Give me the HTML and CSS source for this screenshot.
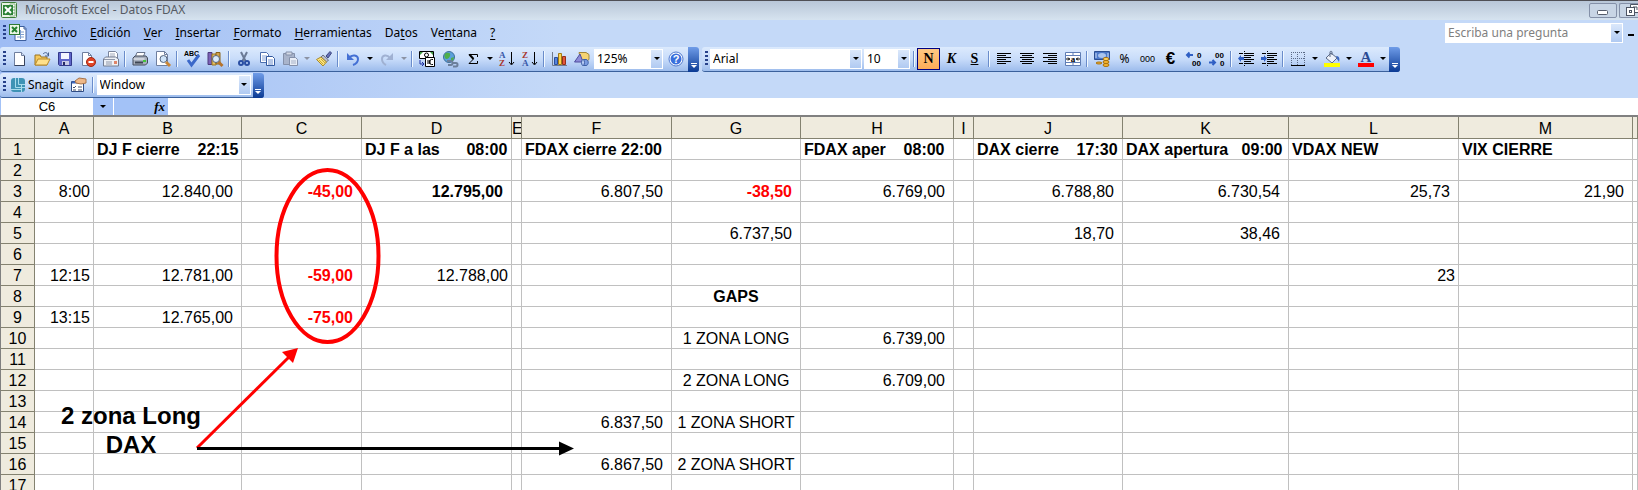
FILE: index.html
```html
<!DOCTYPE html>
<html lang="es">
<head>
    <meta charset="UTF-8">
    <title>Microsoft Excel - Datos FDAX</title>
    <link rel="stylesheet" href="styles.css">
</head>
<body>
<header class="title_bar">
    <svg class="icon" viewBox="0 0 16 16"><rect x="0.5" y="0.5" width="15" height="15" rx="1" fill="#e9f3e4" stroke="#3f7f3a"/><path d="M9 2h5v12H9z" fill="#fff" stroke="#8db98a"/><path d="M10 5h4M10 8h4M10 11h4" stroke="#6fa56b"/><path d="M2 3h10v10H2z" fill="#2c8236"/><path d="M4 5l6 6M10 5l-6 6" stroke="#fff" stroke-width="2"/></svg>
    <h1 class="title_text">Microsoft Excel - Datos FDAX</h1>
    <button class="window_button" aria-label="Minimizar"><svg width="12" height="14" viewBox="0 0 12 14"><rect x="0.5" y="7.5" width="10" height="4" rx="1" fill="#fff" stroke="#555c6b"/></svg></button>
    <button class="window_button cut" aria-label="Restaurar"><svg width="12" height="14" viewBox="0 0 12 14"><path d="M4.500 1.500h8v8h-8z" fill="#fff" stroke="#4d5463"/><path d="M7 4h4v3" fill="none" stroke="#4d5463"/><rect x="0.500" y="4.500" width="8" height="8" fill="#fff" stroke="#4d5463"/><rect x="3.500" y="7.500" width="2" height="2" fill="none" stroke="#4d5463"/></svg></button>
</header>

<div class="bars">
    <nav class="menu_bar">
        <span class="grip"></span>
        <svg class="book_icon" width="18" height="18" viewBox="0 0 18 18"><path d="M6 2.500h9l2 2v12H6z" fill="#fff" stroke="#3c5f9e"/><path d="M8 8h7M8 10.500h7M8 13h7M11.500 6v9" stroke="#7e9fd0"/><path d="M15 2v3h2" fill="none" stroke="#3c5f9e"/><rect x="0.500" y="0.500" width="10" height="10" fill="#eaf5e6" stroke="#2f7a36"/><path d="M3 3l5 5M8 3L3 8" stroke="#25812f" stroke-width="2"/></svg>
        <button class="menu_item"><u>A</u>rchivo</button>
        <button class="menu_item"><u>E</u>dición</button>
        <button class="menu_item"><u>V</u>er</button>
        <button class="menu_item"><u>I</u>nsertar</button>
        <button class="menu_item"><u>F</u>ormato</button>
        <button class="menu_item"><u>H</u>erramientas</button>
        <button class="menu_item">Da<u>t</u>os</button>
        <button class="menu_item">Ve<u>n</u>tana</button>
        <button class="menu_item"><u>?</u></button>
        <label class="combo ask"><input type="text" placeholder="Escriba una pregunta" aria-label="Escriba una pregunta"><span class="combo_arrow"></span></label>
        <button class="close_book" aria-label="Minimizar ventana"></button>
    </nav>

    <div class="toolbar_row">
        <div class="toolbar">
            <span class="grip"></span>
            <button class="tool" aria-label="Nuevo"><svg class="icon" viewBox="0 0 16 16"><path d="M3.500 1.500h7l3 3v10h-10z" fill="#fff" stroke="#6f7f9f"/><path d="M10.500 1.500v3h3" fill="#d5e0f4" stroke="#6f7f9f"/><path d="M13.500 5v9.500h-10" fill="none" stroke="#38435c"/></svg></button>
            <button class="tool" aria-label="Abrir"><svg class="icon" viewBox="0 0 16 16"><path d="M1 4h5l1 2h6v8H1z" fill="#f5c95c" stroke="#9c7420"/><path d="M1 14l3-6h12l-3 6z" fill="#ffe08a" stroke="#b98a28"/><path d="M9 3c2-2 4-2 5 1M14.500 1.500V5H11" fill="none" stroke="#48628f"/></svg></button>
            <button class="tool" aria-label="Guardar"><svg class="icon" viewBox="0 0 16 16"><path d="M1.500 1.500h13v13h-12l-1-1z" fill="#5f66c9" stroke="#33398a"/><path d="M4 2h8v6H4z" fill="#f4f6ff"/><path d="M5 10h7v4H5z" fill="#c9cce6"/><path d="M6 11h2v3H6z" fill="#262b66"/></svg></button>
            <button class="tool" aria-label="Permiso"><svg class="icon" viewBox="0 0 16 16"><path d="M2.500 1.500h6l3 3v10h-9z" fill="#fff" stroke="#6f7f9f"/><path d="M8.500 1.500v3h3" fill="none" stroke="#6f7f9f"/><circle cx="11" cy="11" r="4.500" fill="#e04326" stroke="#a32713"/><path d="M8.500 11h5" stroke="#fff" stroke-width="2"/></svg></button>
            <button class="tool" aria-label="Correo electrónico"><svg class="icon" viewBox="0 0 16 16"><path d="M5.500 0.500h7l2 2v6h-9z" fill="#fff" stroke="#7a859c"/><path d="M7 3h5M7 5h5" stroke="#a0a9bb"/><path d="M0.500 8l2-2h10l3 2v7h-15z" fill="#eef1f6" stroke="#727c90"/><path d="M1 8.500h11M3 11h6M3 13h6" stroke="#8f98aa"/><path d="M11 10h3v3h-3z" fill="#df8468"/></svg></button>
            <span class="separator"></span>
            <button class="tool" aria-label="Imprimir"><svg class="icon" viewBox="0 0 16 16"><path d="M5 1.500h8l-2 5H3z" fill="#fff" stroke="#67738c"/><path d="M1 7l2-2h11l1.500 2v5l-2 2H1z" fill="#a7afbd" stroke="#434b5b"/><path d="M1.500 8h11" stroke="#f4f6fa"/><path d="M3 11.500h8" stroke="#3e4654" stroke-width="2"/><path d="M11 9h3v2h-3z" fill="#43c53a"/></svg></button>
            <button class="tool" aria-label="Vista preliminar"><svg class="icon" viewBox="0 0 16 16"><path d="M1.500 0.500h8l3 3v11h-11z" fill="#fff" stroke="#6f7f9f"/><path d="M9.500 0.500v3h3" fill="none" stroke="#6f7f9f"/><circle cx="8.500" cy="8" r="3.500" fill="#cfe4fa" stroke="#56657e"/><path d="M11 11l4 4" stroke="#c98534" stroke-width="3"/></svg></button>
            <span class="separator"></span>
            <button class="tool" aria-label="Ortografía"><svg class="icon" viewBox="0 0 16 16"><text class="tiny" x="0" y="5">ABC</text><path d="M4 9l3.500 5L15 4" fill="none" stroke="#3b68c9" stroke-width="3"/></svg></button>
            <button class="tool" aria-label="Referencia"><svg class="icon" viewBox="0 0 16 16"><path d="M1 1.500h4v12H1z" fill="#7c62b8" stroke="#4c3a7c"/><path d="M5 3h4v11H5z" fill="#e6c063" stroke="#9a7523"/><path d="M9 1.500h4V13H9z" fill="#d3a34d" stroke="#87621b"/><circle cx="9" cy="8" r="3.500" fill="#dcebfb" stroke="#56657e"/><path d="M11.500 11l4 4" stroke="#b5722c" stroke-width="3"/></svg></button>
            <span class="separator"></span>
            <button class="tool" aria-label="Cortar"><svg class="icon" viewBox="0 0 16 16"><path d="M5 1l4.500 9M11 1L6.500 10" stroke="#6b7a96" stroke-width="2"/><circle cx="5" cy="12" r="2" fill="none" stroke="#2a4ea3" stroke-width="2"/><circle cx="11" cy="12" r="2" fill="none" stroke="#2a4ea3" stroke-width="2"/></svg></button>
            <button class="tool" aria-label="Copiar"><svg class="icon" viewBox="0 0 16 16"><path d="M1.500 1.500h6l2 2v8h-8z" fill="#fff" stroke="#4c6fae"/><path d="M3 5h5M3 7h5M3 9h5" stroke="#86a4d8"/><path d="M7.500 5.500h6l2 2v7h-8z" fill="#fff" stroke="#31589e"/><path d="M9 9h5M9 11h5M9 13h5" stroke="#6c8fce"/></svg></button>
            <button class="tool" aria-label="Pegar"><svg class="icon" viewBox="0 0 16 16"><path d="M1.500 2.500h11v11h-11z" fill="#a9b4cb" stroke="#8490aa"/><path d="M4 1h6v3H4z" fill="#d4dae6" stroke="#8490aa"/><path d="M7.500 6.500h6l2 2v6h-8z" fill="#e8edf6" stroke="#8490aa"/><path d="M9 10h5M9 12h5" stroke="#a7b2c8"/></svg></button>
            <button class="tool_more" aria-label="Opciones de pegado"><span class="arrow dim"></span></button>
            <button class="tool" aria-label="Copiar formato"><svg class="icon" viewBox="0 0 16 16"><path d="M10 5l4-4.500 1.500 1.500L12 7z" fill="#6672b8" stroke="#3c4680"/><path d="M7 4l5.500 5-2 2L5 6z" fill="#b9bfd0" stroke="#6b7284"/><path d="M5 6l5.500 5L7 15 0.500 8.500z" fill="#fae27a" stroke="#a98a2a"/><path d="M3 9l4 4M5 8l4 4" stroke="#c9a83d"/></svg></button>
            <span class="separator"></span>
            <button class="tool" aria-label="Deshacer"><svg class="icon" viewBox="0 0 16 16"><path d="M4 7c3-4 9-3 9 1 0 3-2 5-5 6" fill="none" stroke="#4470d4" stroke-width="2"/><path d="M2 2v7h7z" fill="#4470d4"/></svg></button>
            <button class="tool_more" aria-label="Lista de deshacer"><span class="arrow"></span></button>
            <button class="tool" aria-label="Rehacer"><svg class="icon" viewBox="0 0 16 16"><path d="M11 7C8 3 3 4 3 8c0 3 2 5 4 6" fill="none" stroke="#a0b1d2" stroke-width="2"/><path d="M14 2v7H7z" fill="#a0b1d2"/></svg></button>
            <button class="tool_more" aria-label="Lista de rehacer"><span class="arrow dim"></span></button>
            <span class="separator"></span>
            <button class="tool" aria-label="Conversión a euros"><svg class="icon" viewBox="0 0 16 16"><path d="M0.500 0.500h14v7h-14z" fill="#fff" stroke="#000"/><path d="M1 1h3L1 4zM14 1v3l-3-3z" fill="#3f9b43"/><circle cx="7.500" cy="4" r="2" fill="none" stroke="#000"/><path d="M6.500 6.500h9v9h-9z" fill="#fff" stroke="#000"/><path d="M14 8.500c-5-1-5 6 0 5M8 10h4M8 12h4" fill="none" stroke="#000" stroke-width="1"/><path d="M1 9v4h3M3 11l2 2-2 2" fill="none" stroke="#1c2fa0"/></svg></button>
            <button class="tool" aria-label="Hipervínculo"><svg class="icon" viewBox="0 0 16 16"><circle cx="7" cy="6" r="5.500" fill="#5aa0dc" stroke="#3e6f9a"/><path d="M4 2c3-1 5 0 4 3s-4 4-5 2-1-4 1-5zM9 7l3-1-1 4-2 1z" fill="#4fae4a"/><path d="M5 10h4c2 0 2 4 0 4H6M10 12h4c2 0 2 3.500 0 3.500h-3" fill="none" stroke="#6c7f9b" stroke-width="2"/></svg></button>
            <button class="tool" aria-label="Autosuma"><svg class="icon" viewBox="0 0 16 16"><path d="M12.500 6V3.500H4L8.500 8 4 12.500h8.500V10" fill="none" stroke="#000"/><path d="M4.500 3.500L8.500 8" stroke="#000" stroke-width="2"/></svg></button>
            <button class="tool_more" aria-label="Más funciones"><span class="arrow"></span></button>
            <button class="tool" aria-label="Orden ascendente"><svg class="icon" viewBox="0 0 16 16"><text class="sort blue" x="0" y="7">A</text><text class="sort red" x="0" y="15">Z</text><path d="M12.500 1v12M10 11l2.500 3 2.500-3" fill="none" stroke="#000"/></svg></button>
            <button class="tool" aria-label="Orden descendente"><svg class="icon" viewBox="0 0 16 16"><text class="sort red" x="0" y="7">Z</text><text class="sort blue" x="0" y="15">A</text><path d="M12.500 1v12M10 11l2.500 3 2.500-3" fill="none" stroke="#000"/></svg></button>
            <span class="separator"></span>
            <button class="tool" aria-label="Asistente para gráficos"><svg class="icon" viewBox="0 0 16 16"><path d="M1.500 1v13.500H16" fill="none" stroke="#707a8c"/><path d="M3.500 6.500h3v7h-3z" fill="#5683dd" stroke="#2c4f9b"/><path d="M7.500 2.500h3v11h-3z" fill="#ffd44f" stroke="#a17a16"/><path d="M11.500 5.500h3v8h-3z" fill="#e2573b" stroke="#93301c"/></svg></button>
            <button class="tool" aria-label="Dibujo"><svg class="icon" viewBox="0 0 16 16"><path d="M5 1.500h7l3 2v5l-3 2H7z" fill="#f5d372" stroke="#a2863c"/><path d="M0.500 11L6 3l3 8z" fill="#8d8cd8" stroke="#4e4d9e"/><path d="M9 8.500h3c3 0 3 6 0 6H9z" fill="#7a9be0" stroke="#3e5fa6"/><ellipse cx="9" cy="11.500" rx="1.500" ry="3" fill="#b9cdf5" stroke="#3e5fa6"/></svg></button>
            <label class="combo zoom"><select aria-label="Zoom"><option>125%</option></select><span class="combo_arrow"></span></label>
            <button class="tool" aria-label="Ayuda"><svg class="icon" viewBox="0 0 16 16"><circle cx="8" cy="8" r="7" fill="#fff" stroke="#4f79cf"/><circle cx="8" cy="8" r="5.500" fill="#3a6fdc"/><text class="help_mark" x="8" y="12">?</text></svg></button>
            <button class="cap" aria-label="Opciones de barra"><span class="cap_mark"></span></button>
        </div>
        <div class="toolbar">
            <span class="grip"></span>
            <label class="combo font_name"><select aria-label="Fuente"><option>Arial</option></select><span class="combo_arrow"></span></label>
            <label class="combo font_size"><select aria-label="Tamaño de fuente"><option>10</option></select><span class="combo_arrow"></span></label>
            <span class="separator"></span>
            <button class="tool letter active" aria-pressed="true"><b>N</b></button>
            <button class="tool letter"><i>K</i></button>
            <button class="tool letter"><u>S</u></button>
            <span class="separator"></span>
            <button class="tool" aria-label="Alinear a la izquierda"><svg class="icon lines" viewBox="0 0 16 16"><path d="M1 2.500h14M1 4.500h9M1 6.500h14M1 8.500h9M1 10.500h14M1 12.500h9"/></svg></button>
            <button class="tool" aria-label="Centrar"><svg class="icon lines" viewBox="0 0 16 16"><path d="M1 2.500h14M3 4.500h10M1 6.500h14M3 8.500h10M1 10.500h14M3 12.500h10"/></svg></button>
            <button class="tool" aria-label="Alinear a la derecha"><svg class="icon lines" viewBox="0 0 16 16"><path d="M1 2.500h14M6 4.500h9M1 6.500h14M6 8.500h9M1 10.500h14M6 12.500h9"/></svg></button>
            <button class="tool" aria-label="Combinar y centrar"><svg class="icon" viewBox="0 0 16 16"><path d="M0.500 1.500h15v13h-15z" fill="#fff" stroke="#5f7db5"/><path d="M1 4.500h14M1 11.500h14M8 1v3M8 12v3" stroke="#5f7db5"/><text class="merge_a" x="8" y="11">a</text><path d="M1 8h4M3 6.500L4.500 8 3 9.500M15 8h-4M13 6.500L11.500 8 13 9.500" fill="none" stroke="#000"/></svg></button>
            <span class="separator"></span>
            <button class="tool" aria-label="Estilo moneda"><svg class="icon" viewBox="0 0 16 16"><path d="M0.500 0.500h15v8h-15z" fill="#4b78c9" stroke="#2b4e92"/><ellipse cx="8" cy="4.500" rx="4" ry="2.500" fill="#a9c4ee"/><path d="M2 2v5M14 2v5" stroke="#cfdff7"/><ellipse cx="12" cy="8" rx="3" ry="1.500" fill="#ffd768" stroke="#a86f0b"/><ellipse cx="12" cy="11" rx="3" ry="1.500" fill="#f7b733" stroke="#a86f0b"/><ellipse cx="12" cy="14" rx="3" ry="1.500" fill="#f7b733" stroke="#a86f0b"/><ellipse cx="5" cy="12" rx="3" ry="1" fill="#f7b733" stroke="#a86f0b"/></svg></button>
            <button class="tool number">%</button>
            <button class="tool number small">000</button>
            <button class="tool number euro">€</button>
            <button class="tool" aria-label="Aumentar decimales"><svg class="icon" viewBox="0 0 16 16"><path d="M1 4h6M3.500 1.500L1 4l2.500 2.500" fill="none" stroke="#2f5fc4" stroke-width="2"/><text class="digits" x="11" y="7">0</text><text class="digits" x="6" y="15">00</text></svg></button>
            <button class="tool" aria-label="Disminuir decimales"><svg class="icon" viewBox="0 0 16 16"><text class="digits" x="6" y="7">00</text><text class="digits" x="11" y="15">0</text><path d="M0 11.500h6M3.500 9L6 11.500 3.500 14" fill="none" stroke="#2f5fc4" stroke-width="2"/></svg></button>
            <span class="separator"></span>
            <button class="tool" aria-label="Disminuir sangría"><svg class="icon lines" viewBox="0 0 16 16"><path d="M1 2.500h4M7 2.500h9M7 4.500h9M7 6.500h6M7 8.500h9M7 10.500h6M1 12.500h4M7 12.500h9"/><path class="dots" d="M6.500 0v16"/><path class="pointer" d="M0 7.500L3 4v2h3v3H3v2z"/></svg></button>
            <button class="tool" aria-label="Aumentar sangría"><svg class="icon lines" viewBox="0 0 16 16"><path d="M1 2.500h4M7 2.500h9M7 4.500h9M7 6.500h6M7 8.500h9M7 10.500h6M1 12.500h4M7 12.500h9"/><path class="dots" d="M6.500 0v16"/><path class="pointer" d="M6 7.500L3 4v2H0v3h3v2z"/></svg></button>
            <span class="separator"></span>
            <button class="tool" aria-label="Bordes"><svg class="icon" viewBox="0 0 16 16"><path d="M1 1.500h14M1 7.500h14M1.500 1v13M7.500 1v13M14.500 1v13" stroke="#5b6a86" stroke-dasharray="1 1"/><path d="M1 14.500h14" stroke="#000"/></svg></button>
            <button class="tool_more" aria-label="Más bordes"><span class="arrow"></span></button>
            <button class="tool" aria-label="Color de relleno"><svg class="icon" viewBox="0 0 16 16"><path d="M2 7l5-5 6 5-5 5z" fill="#eef2fa" stroke="#5b6a86"/><path d="M6 6V1c0-1 2-1 2 0v3" fill="none" stroke="#5b6a86"/><path d="M12 5c3 0 4 2 3 6-1-2-2-2-2-4z" fill="#3c68c0"/><path d="M0 12h16v4H0z" fill="#ffff00"/></svg></button>
            <button class="tool_more" aria-label="Más colores de relleno"><span class="arrow"></span></button>
            <button class="tool" aria-label="Color de fuente"><svg class="icon" viewBox="0 0 16 16"><text class="font_a" x="8" y="11">A</text><path d="M0 12h16v4H0z" fill="#ff0000"/></svg></button>
            <button class="tool_more" aria-label="Más colores de fuente"><span class="arrow"></span></button>
            <button class="cap" aria-label="Opciones de barra"><span class="cap_mark"></span></button>
        </div>
    </div>

    <div class="toolbar_row">
        <div class="toolbar">
            <span class="grip"></span>
            <button class="tool snagit"><svg class="icon" viewBox="0 0 16 16"><rect x="1" y="1" width="14" height="14" rx="3" fill="#3f93b5"/><path d="M5.500 1v9.500H15M8.500 1v6.500H15M11.500 8v7M1 12.500h10" fill="none" stroke="#a8dcec"/></svg>Snagit</button>
            <button class="tool" aria-label="Perfil"><svg class="icon" viewBox="0 0 16 16"><path d="M1.500 4.500h12v10h-12z" fill="#fff" stroke="#2f4c85"/><path d="M2 5.500h11" stroke="#3c68c0" stroke-width="2"/><path d="M3 10l1 1 2-2M3 13h3M8 10h4M8 13h4" fill="none" stroke="#44526e"/><path d="M5 4l4-3 7 1v4l-5 1-5-1z" fill="#eeb888" stroke="#a8744a"/></svg></button>
            <span class="separator"></span>
            <label class="combo capture"><select aria-label="Perfil de captura"><option>Window</option></select><span class="combo_arrow"></span></label>
            <button class="cap" aria-label="Opciones de barra"><span class="cap_mark"></span></button>
        </div>
    </div>
</div>

<div class="formula_bar">
    <input class="name_box" type="text" value="C6" aria-label="Cuadro de nombres">
    <button class="name_more" aria-label="Nombres"><span class="arrow"></span></button>
    <button class="fx_button"><i>fx</i></button>
    <input class="formula_input" type="text" aria-label="Barra de fórmulas">
</div>

<main class="sheet">
    <table class="sheet_table">
        <colgroup>
            <col class="col_head"><col class="col_a"><col class="col_b"><col class="col_c"><col class="col_d"><col class="col_e"><col class="col_f"><col class="col_g"><col class="col_h"><col class="col_i"><col class="col_j"><col class="col_k"><col class="col_l"><col class="col_m"><col>
        </colgroup>
        <thead>
        <tr><th></th><th>A</th><th>B</th><th>C</th><th>D</th><th>E</th><th>F</th><th>G</th><th>H</th><th>I</th><th>J</th><th>K</th><th>L</th><th>M</th><th></th></tr>
        </thead>
        <tbody>
        <tr class="heading"><th>1</th><td></td><td>DJ F cierre    22:15</td><td></td><td>DJ F a las      08:00</td><td></td><td>FDAX cierre 22:00</td><td></td><td>FDAX aper    08:00</td><td></td><td>DAX cierre    17:30</td><td>DAX apertura   09:00</td><td>VDAX NEW</td><td>VIX CIERRE</td><td></td></tr>
        <tr><th>2</th><td></td><td></td><td></td><td></td><td></td><td></td><td></td><td></td><td></td><td></td><td></td><td></td><td></td><td></td></tr>
        <tr><th>3</th><td>8:00</td><td class="num">12.840,00</td><td class="num neg">-45,00</td><td class="num bold">12.795,00</td><td></td><td class="num">6.807,50</td><td class="num neg">-38,50</td><td class="num">6.769,00</td><td></td><td class="num">6.788,80</td><td class="num">6.730,54</td><td class="num">25,73</td><td class="num">21,90</td><td></td></tr>
        <tr><th>4</th><td></td><td></td><td></td><td></td><td></td><td></td><td></td><td></td><td></td><td></td><td></td><td></td><td></td><td></td></tr>
        <tr><th>5</th><td></td><td></td><td></td><td></td><td></td><td></td><td class="num">6.737,50</td><td></td><td></td><td class="num">18,70</td><td class="num">38,46</td><td></td><td></td><td></td></tr>
        <tr><th>6</th><td></td><td></td><td></td><td></td><td></td><td></td><td></td><td></td><td></td><td></td><td></td><td></td><td></td><td></td></tr>
        <tr><th>7</th><td>12:15</td><td class="num">12.781,00</td><td class="num neg">-59,00</td><td>12.788,00</td><td></td><td></td><td></td><td></td><td></td><td></td><td></td><td>23</td><td></td><td></td></tr>
        <tr><th>8</th><td></td><td></td><td></td><td></td><td></td><td></td><td class="center bold">GAPS</td><td></td><td></td><td></td><td></td><td></td><td></td><td></td></tr>
        <tr><th>9</th><td>13:15</td><td class="num">12.765,00</td><td class="num neg">-75,00</td><td></td><td></td><td></td><td></td><td></td><td></td><td></td><td></td><td></td><td></td><td></td></tr>
        <tr><th>10</th><td></td><td></td><td></td><td></td><td></td><td></td><td class="center">1 ZONA LONG</td><td class="num">6.739,00</td><td></td><td></td><td></td><td></td><td></td><td></td></tr>
        <tr><th>11</th><td></td><td></td><td></td><td></td><td></td><td></td><td></td><td></td><td></td><td></td><td></td><td></td><td></td><td></td></tr>
        <tr><th>12</th><td></td><td></td><td></td><td></td><td></td><td></td><td class="center">2 ZONA LONG</td><td class="num">6.709,00</td><td></td><td></td><td></td><td></td><td></td><td></td></tr>
        <tr><th>13</th><td></td><td></td><td></td><td></td><td></td><td></td><td></td><td></td><td></td><td></td><td></td><td></td><td></td><td></td></tr>
        <tr><th>14</th><td></td><td></td><td></td><td></td><td></td><td class="num">6.837,50</td><td class="center">1 ZONA SHORT</td><td></td><td></td><td></td><td></td><td></td><td></td><td></td></tr>
        <tr><th>15</th><td></td><td></td><td></td><td></td><td></td><td></td><td></td><td></td><td></td><td></td><td></td><td></td><td></td><td></td></tr>
        <tr><th>16</th><td></td><td></td><td></td><td></td><td></td><td class="num">6.867,50</td><td class="center">2 ZONA SHORT</td><td></td><td></td><td></td><td></td><td></td><td></td><td></td></tr>
        <tr><th>17</th><td></td><td></td><td></td><td></td><td></td><td></td><td></td><td></td><td></td><td></td><td></td><td></td><td></td><td></td></tr>
        </tbody>
    </table>
    <!-- notas dibujadas encima de la hoja -->
    <svg class="notes" width="600" height="370" viewBox="0 0 600 370">
        <ellipse cx="327.500" cy="141" rx="51" ry="86" fill="none" stroke="#ff0000" stroke-width="4"/>
        <path d="M197 333L289 242" stroke="#ff0000" stroke-width="3"/>
        <path d="M298 233l-16 4 11 11z" fill="#ff0000"/>
        <path d="M197 333.500h364" stroke="#000" stroke-width="3"/>
        <path d="M574 333.500l-15-7v14z" fill="#000"/>
    </svg>
    <p class="note_text">2 zona Long<br>DAX</p>
</main>
</body>
</html>
```
FILE: styles.css
```css
* {
    margin: 0;
    padding: 0;
    box-sizing: border-box;
}

body {
    display: flex;
    flex-direction: column;
    height: 100vh;
    overflow: hidden;
    background-color: #fff;
    font-family: "Noto Sans", "Open Sans", sans-serif;
    font-size: 12px;
    color: #000;
}

button, input, select {
    border: 0;
    border-radius: 0;
    background: none;
    font: inherit;
    color: inherit;
    outline: none;
}

.icon {
    width: 16px;
    height: 16px;
    flex: none;
    overflow: visible;
}

/* title */
.title_bar {
    display: flex;
    flex: none;
    height: 20px;
    padding-left: 1px;
    padding-bottom: 1px;
    align-items: center;
    border-top: 1px solid #4f4f55;
    background: linear-gradient(#b8c6d8, #d6e3ef);
}
.title_text {
    flex: 1;
    margin-left: 8px;
    font-size: 12px;
    font-weight: normal;
    line-height: 18px;
    color: #565b64;
}
.window_button {
    display: flex;
    width: 28px;
    height: 15px;
    margin-left: 2px;
    align-items: center;
    justify-content: center;
    border: 1px solid #8490a8;
    border-radius: 2px;
    background-color: #c8d5e5;
}
.window_button.cut {
    width: 19px;
    border-right: 0;
    border-radius: 2px 0 0 2px;
    justify-content: flex-end;
}

/* menu and toolbars */
.bars {
    flex: none;
    background: linear-gradient(to right, #9ebcf4, #c4d9f8 560px);
}
.menu_bar {
    display: flex;
    height: 27px;
    padding-left: 3px;
    padding-bottom: 2px;
    align-items: center;
}
.grip {
    flex: none;
    width: 3px;
    height: 16px;
    margin-right: 1px;
    background: repeating-linear-gradient(#27418a 0 2px, transparent 2px 4px);
}
.book_icon {
    margin-left: 2px;
    margin-right: 2px;
}
.menu_item {
    padding: 0 7px 0 6px;
    line-height: 20px;
    white-space: nowrap;
}
.menu_item u {
    text-underline-offset: 2px;
}
.combo {
    display: grid;
    flex: none;
    height: 20px;
    align-items: center;
    background-color: #fff;
}
.combo select, .combo input {
    grid-area: 1 / 1;
    width: 100%;
    height: 20px;
    padding: 0 3px;
    appearance: none;
}
.combo_arrow {
    display: flex;
    grid-area: 1 / 1;
    justify-self: end;
    width: 11px;
    height: 18px;
    margin-right: 1px;
    align-items: center;
    justify-content: center;
    background: linear-gradient(#dbe8fb, #b0caf2);
    pointer-events: none;
}
.arrow, .combo_arrow::after {
    content: "";
    border: 3px solid transparent;
    border-top: 3px solid #000;
    border-bottom: 0;
}
.arrow.dim {
    border-top-color: #8c93a3;
}
.ask {
    width: 178px;
    margin-left: auto;
}
.ask input::placeholder {
    color: #7f7f7f;
    opacity: 1;
}
.close_book {
    width: 6px;
    height: 2px;
    margin: 4px 4px 0 5px;
    background-color: #000;
}

.toolbar_row {
    display: flex;
    gap: 3px;
}
.toolbar_row + .toolbar_row {
    margin-top: 1px;
}
.toolbar {
    display: flex;
    flex: none;
    height: 25px;
    padding-left: 3px;
    padding-bottom: 1px;
    align-items: center;
    border-bottom: 1px solid #3b619c;
    border-radius: 3px;
    background: linear-gradient(#dceafd, #c8dcfa 50%, #9dbcec);
}
.tool {
    display: flex;
    flex: none;
    width: 23px;
    height: 22px;
    align-items: center;
    justify-content: center;
}
.tool_more {
    display: flex;
    width: 11px;
    height: 22px;
    align-items: center;
    justify-content: center;
}
.separator {
    width: 2px;
    height: 16px;
    margin: 0 2px;
    border-left: 1px solid #6a8ccb;
    border-right: 1px solid #f1f9ff;
}
.toolbar .combo {
    margin: 0 1px;
}
.zoom {
    width: 69px;
}
.font_name {
    width: 152px;
}
.font_size {
    width: 46px;
}
.capture {
    width: 154px;
}
.cap {
    display: flex;
    flex-direction: column;
    width: 11px;
    height: 25px;
    margin: 0 0 -2px 1px;
    padding-bottom: 4px;
    gap: 1px;
    align-items: center;
    justify-content: flex-end;
    border-radius: 0 3px 3px 0;
    background: linear-gradient(#6f9ce8, #0b3a94);
}
.cap::before {
    content: "";
    width: 6px;
    height: 1px;
    background-color: #fff;
}
.cap_mark {
    border: 3px solid transparent;
    border-top: 3px solid #fff;
    border-bottom: 0;
}
.letter {
    font-family: "Liberation Serif", serif;
    font-size: 14px;
    font-weight: bold;
}
.active {
    border: 1px solid #000080;
    background: linear-gradient(#fec983, #fdac58);
}
.number {
    font-size: 12px;
}
.number.small {
    font-family: "Liberation Sans", sans-serif;
    font-size: 9px;
}
.number.euro {
    font-family: "Liberation Sans", sans-serif;
    font-size: 17px;
    font-weight: bold;
}
.lines path {
    fill: none;
    stroke: #000;
}
.lines .dots {
    stroke-dasharray: 1 1;
}
.lines .pointer {
    fill: #2f5fc4;
    stroke: none;
}
.tiny {
    font: bold 7px "Liberation Sans", sans-serif;
}
.sort {
    font: bold 9px "Liberation Serif", serif;
}
.blue {
    fill: #3758a8;
}
.red {
    fill: #a8372e;
}
.help_mark {
    font: bold 11px "Liberation Sans", sans-serif;
    fill: #fff;
    text-anchor: middle;
}
.merge_a {
    font: bold 9px "Liberation Serif", serif;
    text-anchor: middle;
}
.digits {
    font: bold 8px "Liberation Sans", sans-serif;
}
.font_a {
    font: bold 15px "Liberation Serif", serif;
    fill: #2b4b93;
    text-anchor: middle;
}
.snagit {
    width: auto;
    gap: 2px;
    padding: 0 3px;
}

/* formula bar */
.formula_bar {
    display: flex;
    flex: none;
    height: 17px;
    padding-left: 1px;
    background-color: #a3c2f7;
}
.name_box {
    width: 92px;
    font-family: "Liberation Sans", Arial, sans-serif;
    font-size: 13px;
    text-align: center;
    background-color: #fff;
}
.name_more {
    display: flex;
    width: 21px;
    align-items: center;
    justify-content: center;
    border-right: 1px solid #fff;
}
.fx_button {
    width: 54px;
    padding-right: 3px;
    font: bold 13px/15px "Liberation Serif", serif;
    text-align: right;
}
.formula_input {
    flex: 1;
    background-color: #fff;
}

/* sheet */
.sheet {
    position: relative;
    flex: 1;
    overflow: hidden;
    border-top: 2px solid #808080;
    font-family: "Liberation Sans", Arial, sans-serif;
    font-size: 16px;
}
.sheet_table {
    width: 100%;
    table-layout: fixed;
    border-collapse: separate;
    border-spacing: 0;
}
.sheet_table th, .sheet_table td {
    height: 21px;
    padding-top: 2px;
    line-height: 18px;
    overflow: hidden;
    white-space: pre;
    border-right: 1px solid #c0c0c0;
    border-bottom: 1px solid #c0c0c0;
}
.sheet_table td {
    padding-left: 3px;
    padding-right: 3px;
    text-align: right;
}
.sheet_table th {
    font-weight: normal;
    background-color: #efebde;
    border-color: #848270;
}
.sheet_table thead th {
    height: 22px;
}
.sheet_table th:first-child {
    border-left: 1px solid #808080;
}
.sheet_table .heading td {
    font-weight: bold;
    text-align: left;
}
.sheet_table .num {
    padding-right: 8px;
}
.sheet_table .neg {
    font-weight: bold;
    color: #ff0000;
}
.sheet_table .bold {
    font-weight: bold;
}
.sheet_table .center {
    text-align: center;
}
.col_head { width: 35px; }
.col_a { width: 59px; }
.col_b { width: 148px; }
.col_c { width: 120px; }
.col_d { width: 150px; }
.col_e { width: 10px; }
.col_f { width: 150px; }
.col_g { width: 129px; }
.col_h { width: 153px; }
.col_i { width: 20px; }
.col_j { width: 149px; }
.col_k { width: 166px; }
.col_l { width: 170px; }
.col_m { width: 174px; }

.notes {
    position: absolute;
    top: -2px;
    left: 0;
}
.note_text {
    position: absolute;
    top: 284px;
    left: 61px;
    font-size: 24px;
    font-weight: bold;
    line-height: 29px;
    text-align: center;
}
```
